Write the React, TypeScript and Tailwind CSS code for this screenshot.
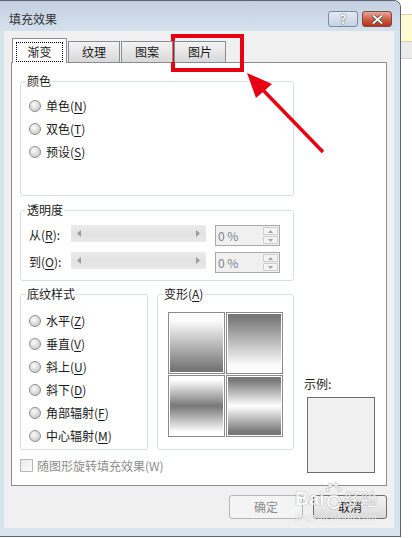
import React from "react";

function Radio({ label, acc }: { label: string; acc: string }) {
  return (
    <div className="flex h-[23px] items-center gap-[5px]">
      <span className="h-[12px] w-[12px] rounded-full border border-[#8e8f8f] bg-[radial-gradient(circle_at_40%_35%,#fbfbfb,#d0d0d0_70%,#b9b9b9)]" />
      <span className="text-[12px] leading-[12px] text-[#1a1a1a]">
        {label}(<u className="underline-offset-2">{acc}</u>)
      </span>
    </div>
  );
}

function Group({ title, className, children }: { title: React.ReactNode; className: string; children?: React.ReactNode }) {
  return (
    <div className={`relative rounded-[3px] border border-[#d5dfe5] ${className}`}>
      <span className="absolute -top-[7px] left-[5px] bg-white px-[1px] text-[12px] leading-[12px] text-[#1a1a1a]">{title}</span>
      {children}
    </div>
  );
}

function Slider() {
  return (
    <div className="flex h-[17px] w-[135px] items-center justify-between bg-[linear-gradient(to_bottom,#ececec,#e2e2e2_50%,#e9e9e9)] px-[6px]">
      <svg width="4" height="7" viewBox="0 0 4 7"><path d="M4 0 L0 3.5 L4 7 Z" fill="#9b9b9b" /></svg>
      <svg width="4" height="7" viewBox="0 0 4 7"><path d="M0 0 L4 3.5 L0 7 Z" fill="#9b9b9b" /></svg>
    </div>
  );
}

function Spin() {
  return (
    <div className="ml-[9px] flex h-[21px] w-[65px] border border-[#a9a9a9] bg-[#f0f0f0] p-[1px]">
      <div className="flex flex-1 items-center pl-[1px] text-[12px] leading-[12px] text-[#7b8594]">0 %</div>
      <div className="flex w-[15px] flex-col gap-[1px]">
        <div className="flex flex-1 items-center justify-center rounded-[1px] border border-[#cdcdcd] bg-[#f4f4f4]">
          <svg width="5" height="3" viewBox="0 0 5 3"><path d="M0 3 L2.5 0 L5 3 Z" fill="#a0a0a0" /></svg>
        </div>
        <div className="flex flex-1 items-center justify-center rounded-[1px] border border-[#cdcdcd] bg-[#f4f4f4]">
          <svg width="5" height="3" viewBox="0 0 5 3"><path d="M0 0 L2.5 3 L5 0 Z" fill="#a0a0a0" /></svg>
        </div>
      </div>
    </div>
  );
}

function Swatch({ fill }: { fill: string }) {
  return (
    <div className="h-[62px] w-[57px] border border-[#8a8a8a] bg-white p-[1px]">
      <div className={`h-full w-full ${fill}`} />
    </div>
  );
}

export default function App() {
  return (
    <div className="relative flex h-[538px] w-[412px] overflow-hidden bg-white font-['Noto_Sans_CJK_SC','Noto_Sans',sans-serif]">
      {/* dialog */}
      <div className="flex h-[537px] w-[401px] flex-col rounded-tr-[7px] border-t border-r border-b border-[#5a6470] bg-[#d8e3f0]">
        {/* title bar */}
        <div className="flex h-[30px] items-start justify-between rounded-tr-[6px] bg-[linear-gradient(to_bottom,#c3d0e0,#d6e1ee)] pr-[8px]">
          <span className="mt-[12px] ml-[9px] text-[12px] leading-[12px] text-[#333]">填充效果</span>
          <div className="mt-[10px] flex gap-[4px]">
            <div className="flex h-[16px] w-[30px] items-center justify-center rounded-[3px] border border-[#7c8ba0] bg-[linear-gradient(to_bottom,#e3eaf3,#c6d3e3)] text-[12px] font-bold leading-[12px] text-white [text-shadow:0_0_2px_#333]">
              ?
            </div>
            <div className="flex h-[16px] w-[30px] items-center justify-center rounded-[3px] border border-[#7a4a44] bg-[linear-gradient(to_bottom,#e9a898,#cf5a40_55%,#b8321c)]">
              <svg width="11" height="9" viewBox="0 0 11 9">
                <path d="M1.5 1 L9.5 8 M9.5 1 L1.5 8" stroke="#4a4a4a" strokeWidth="3.4" strokeLinecap="square" />
                <path d="M1.5 1 L9.5 8 M9.5 1 L1.5 8" stroke="#ffffff" strokeWidth="1.8" strokeLinecap="square" />
              </svg>
            </div>
          </div>
        </div>

        {/* body */}
        <div className="flex flex-1">
          <div className="w-[4px] bg-[#d8e3f0]" />
          <div className="flex w-[390px] flex-col bg-[#f0f0f0] pl-[7px] pt-[7px]">
            {/* tabs */}
            <div className="relative z-10 -mb-[1px] ml-[1px] flex h-[25px] items-start gap-[1px] text-[12px] leading-[12px] text-[#1a1a1a]">
              <div className="h-[25px] w-[55px] border-x border-t border-[#898c95] bg-white p-[3px]">
                <div className="flex h-[20px] items-center justify-center border border-dotted border-black">渐变</div>
              </div>
              {["纹理", "图案", "图片"].map((t) => (
                <div key={t} className="mt-[3px] flex h-[21px] w-[52px] items-center justify-center border-x border-t border-[#898c95] bg-[linear-gradient(to_bottom,#f3f3f3,#e6e6e6_50%,#d8d8d8)]">
                  {t}
                </div>
              ))}
            </div>

            {/* panel */}
            <div className="h-[424px] w-[376px] border border-[#898c95] bg-white pl-[8px] pt-[18px]">
              <Group title="颜色" className="h-[115px] w-[274px] pl-[8px] pt-[12px]">
                <Radio label="单色" acc="N" />
                <Radio label="双色" acc="T" />
                <Radio label="预设" acc="S" />
              </Group>

              <Group title="透明度" className="mt-[14px] h-[71px] w-[274px] pl-[8px] pt-[14px]">
                <div className="flex h-[21px] items-start">
                  <span className="w-[42px] text-[12px] leading-[20px] text-[#1a1a1a]">
                    从(<u className="underline-offset-2">R</u>):
                  </span>
                  <Slider />
                  <Spin />
                </div>
                <div className="mt-[6px] flex h-[21px] items-start">
                  <span className="w-[42px] text-[12px] leading-[20px] text-[#1a1a1a]">
                    到(<u className="underline-offset-2">O</u>):
                  </span>
                  <Slider />
                  <Spin />
                </div>
              </Group>

              <div className="mt-[13px] flex h-[156px] items-start">
                <Group title="底纹样式" className="h-[156px] w-[128px] pl-[8px] pt-[14px]">
                  <Radio label="水平" acc="Z" />
                  <Radio label="垂直" acc="V" />
                  <Radio label="斜上" acc="U" />
                  <Radio label="斜下" acc="D" />
                  <Radio label="角部辐射" acc="F" />
                  <Radio label="中心辐射" acc="M" />
                </Group>
                <Group
                  title={<>变形(<u className="underline-offset-2">A</u>)</>}
                  className="ml-[9px] h-[156px] w-[137px] pl-[10px] pt-[17px]"
                >
                  <div className="grid w-[115px] grid-cols-2 gap-[1px]">
                    <Swatch fill="bg-[linear-gradient(to_bottom,#fbfbfb_12%,#767676_95%)]" />
                    <Swatch fill="bg-[linear-gradient(to_bottom,#767676_5%,#fbfbfb_88%)]" />
                    <Swatch fill="bg-[linear-gradient(to_bottom,#ffffff_5%,#777777_50%,#ffffff_95%)]" />
                    <Swatch fill="bg-[linear-gradient(to_bottom,#777777_5%,#ffffff_50%,#777777_95%)]" />
                  </div>
                </Group>
                <div className="ml-[10px] flex flex-col pt-[84px]">
                  <span className="text-[12px] leading-[12px] text-[#1a1a1a]">示例:</span>
                  <div className="mt-[7px] ml-[3px] h-[76px] w-[68px] border border-[#6b6b6b] bg-[#f0f0f0]" />
                </div>
              </div>

              <div className="mt-[9px] flex items-center gap-[4px]">
                <span className="h-[13px] w-[13px] border border-[#b8b8b8] bg-[linear-gradient(to_bottom_right,#ebebeb,#fafafa)]" />
                <span className="text-[12px] leading-[13px] text-[#8d8d8d]">随图形旋转填充效果(W)</span>
              </div>
            </div>

            {/* buttons */}
            <div className="mt-[9px] flex w-[376px] justify-end gap-[10px] text-[12px] leading-[12px]">
              <div className="flex h-[24px] w-[74px] items-center justify-center rounded-[3px] border border-[#b5b5b5] bg-[#f4f4f4] text-[#8d8d8d]">
                确定
              </div>
              <div className="flex h-[24px] w-[74px] items-center justify-center rounded-[3px] border border-[#6f6f6f] bg-[linear-gradient(to_bottom,#f3f3f3,#e8e8e8_50%,#d9d9d9)] text-[#1a1a1a]">
                取消
              </div>
            </div>
          </div>
          <div className="w-[6px] bg-[#d6e3f1]" />
        </div>
        <div className="h-[8px] bg-[#d8e3f0]" />
      </div>

      {/* window behind, right edge */}
      <div className="flex flex-1 flex-col">
        <div className="h-[14px] bg-white" />
        <div className="h-[28px] border-y border-[#d9d2a2] bg-[#fffbd2]" />
        <div className="h-[17px] border-b border-[#d0d0d0] bg-[#ececec]" />
        <div className="flex-1 bg-white" />
      </div>

      {/* watermark */}
      <div className="pointer-events-none absolute left-[295px] top-[482px] flex flex-col opacity-75">
        <div className="flex items-end text-white [text-shadow:0_0_1px_#888,0_0_1px_#888]">
          <span className="font-['Liberation_Sans',sans-serif] text-[19px] font-bold leading-[20px]">Bai</span>
          <svg width="18" height="28" viewBox="0 0 18 28" className="-mb-[1px]">
            <g fill="white" stroke="#aaa" strokeWidth="0.8">
              <circle cx="5" cy="3.5" r="2.2" />
              <circle cx="11" cy="3" r="2.2" />
              <circle cx="2.5" cy="8" r="1.8" />
              <circle cx="14.5" cy="7.5" r="1.8" />
              <circle cx="9" cy="20" r="6" fill="none" stroke="#aaa" strokeWidth="3.6" />
              <circle cx="9" cy="20" r="6" fill="none" stroke="white" strokeWidth="2.4" />
            </g>
          </svg>
          <span className="ml-[1px] text-[17px] leading-[20px]">经验</span>
        </div>
        <span className="mt-[2px] font-['Liberation_Serif',serif] text-[11px] leading-[10px] text-white [text-shadow:0_0_1px_#999]">
          jingyan.baidu.com
        </span>
      </div>

      {/* red annotation */}
      <div className="pointer-events-none absolute left-[171px] top-[34px] h-[38px] w-[73px] border-[4px] border-[#e60012]" />
      <svg className="pointer-events-none absolute left-0 top-0" width="412" height="538" viewBox="0 0 412 538">
        <path d="M323 152 L262 89" stroke="#e60012" strokeWidth="3.5" />
        <path d="M247 73 L256 98 L272 84 Z" fill="#e60012" />
      </svg>
    </div>
  );
}
